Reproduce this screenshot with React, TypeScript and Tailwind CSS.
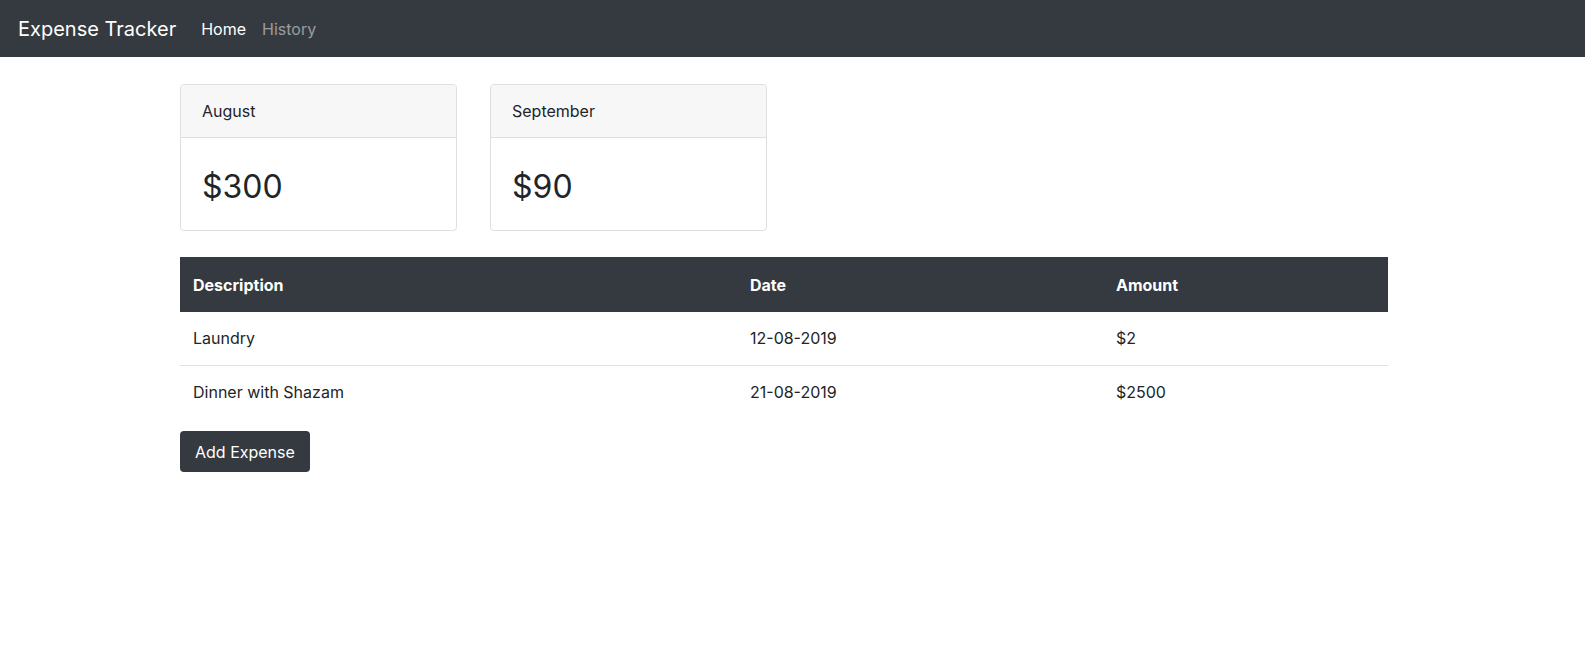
const months = [
  { name: "August", total: "$300" },
  { name: "September", total: "$90" },
]

const expenses = [
  { description: "Laundry", date: "12-08-2019", amount: "$2" },
  { description: "Dinner with Shazam", date: "21-08-2019", amount: "$2500" },
]

export default function App() {
  return (
    <div className="min-h-screen bg-white text-[#212529] font-['Inter','Liberation_Sans',sans-serif]">
      <nav className="flex h-[57px] items-center bg-[#343a40] px-[18px]">
        <span className="mr-[25px] text-[20px] text-white">Expense Tracker</span>
        <a className="mr-[16px] text-[16px] text-white">Home</a>
        <a className="text-[16px] text-white/50">History</a>
      </nav>

      <main className="ml-[180px] w-[1208px] pt-[27px]">
        <div className="flex gap-[33px]">
          {months.map(m => (
            <div key={m.name} className="w-[277px] overflow-hidden rounded-[4px] border border-[#dfdfdf]">
              <div className="flex h-[53px] items-center border-b border-[#dfdfdf] bg-[#f7f7f7] px-[21px] text-[16px]">
                {m.name}
              </div>
              <div className="flex h-[92px] items-center px-[21px] pt-[5px] text-[32px]">{m.total}</div>
            </div>
          ))}
        </div>

        <table className="mt-[26px] w-full border-collapse text-left text-[16px]">
          <thead>
            <tr className="h-[55px] bg-[#343a40] text-white">
              <th className="w-[557px] px-[13px] font-bold">Description</th>
              <th className="w-[366px] px-[13px] font-bold">Date</th>
              <th className="px-[13px] font-bold">Amount</th>
            </tr>
          </thead>
          <tbody>
            {expenses.map((e, i) => (
              <tr key={i} className={i < expenses.length - 1 ? "h-[53px] border-b border-[#dee2e6]" : "h-[54px]"}>
                <td className="px-[13px]">{e.description}</td>
                <td className="px-[13px]">{e.date}</td>
                <td className="px-[13px]">{e.amount}</td>
              </tr>
            ))}
          </tbody>
        </table>

        <button className="mt-[12px] h-[41px] rounded-[4px] bg-[#343a40] px-[15px] text-[16px] text-white">
          Add Expense
        </button>
      </main>
    </div>
  )
}
